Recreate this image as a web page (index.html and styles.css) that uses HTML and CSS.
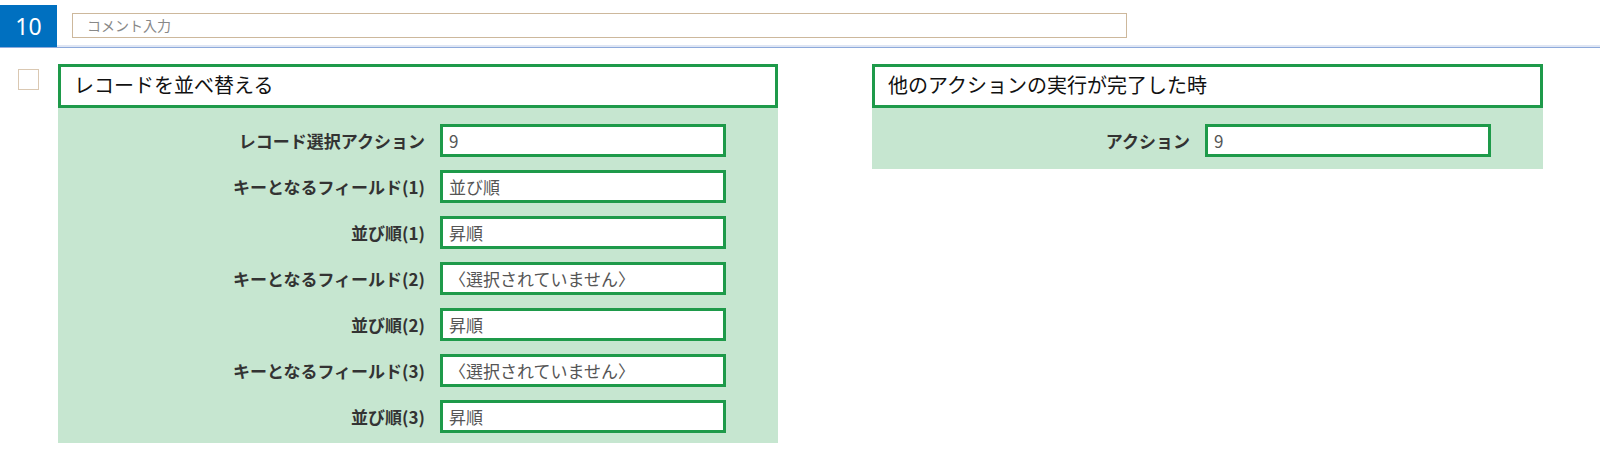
FILE: index.html
```html
<!DOCTYPE html>
<html lang="ja">
<head>
<meta charset="utf-8">
<title>Action 10</title>
<link rel="stylesheet" href="styles.css">
</head>
<body>
<div class="topbar">
  <div class="badge">10</div>
  <div class="comment">コメント入力</div>
</div>
<div class="content">
  <div class="check"></div>
  <div class="panel panel-left">
    <div class="panel-head">レコードを並べ替える</div>
    <div class="panel-body">
      <div class="row"><div class="label">レコード選択アクション</div><div class="field">9</div></div>
      <div class="row"><div class="label">キーとなるフィールド(1)</div><div class="field">並び順</div></div>
      <div class="row"><div class="label">並び順(1)</div><div class="field">昇順</div></div>
      <div class="row"><div class="label">キーとなるフィールド(2)</div><div class="field">〈選択されていません〉</div></div>
      <div class="row"><div class="label">並び順(2)</div><div class="field">昇順</div></div>
      <div class="row"><div class="label">キーとなるフィールド(3)</div><div class="field">〈選択されていません〉</div></div>
      <div class="row"><div class="label">並び順(3)</div><div class="field">昇順</div></div>
    </div>
  </div>
  <div class="panel panel-right">
    <div class="panel-head">他のアクションの実行が完了した時</div>
    <div class="panel-body panel-body-short">
      <div class="row"><div class="label">アクション</div><div class="field">9</div></div>
    </div>
  </div>
</div>
</body>
</html>
```

FILE: styles.css
```css
* { box-sizing: border-box; }
html, body { margin: 0; padding: 0; background: #fff; }
body {
  font-family: "Noto Sans CJK JP", "Noto Sans", sans-serif;
  color: #222;
  width: 1600px;
  height: 452px;
  overflow: hidden;
}
.topbar {
  display: flex;
  align-items: flex-start;
  height: 48px;
  border-bottom: 1px solid #8eaadb;
  box-shadow: inset 0 -2px 0 #dfe6f4;
}
.badge {
  margin-top: 5px;
  width: 57px;
  height: 42px;
  background: #0070c0;
  color: #fff;
  font-family: "Noto Sans", "Open Sans", sans-serif;
  font-size: 23px;
  line-height: 42px;
  text-align: center;
}
.comment {
  margin-top: 13px;
  margin-left: 15px;
  width: 1055px;
  height: 25px;
  border: 1px solid #cdb89c;
  background: #fff;
  color: #888;
  font-size: 14px;
  line-height: 23px;
  padding-left: 14px;
}
.content {
  display: flex;
  align-items: flex-start;
  padding: 16px 0 0 18px;
}
.check {
  width: 21px;
  height: 21px;
  margin-top: 5px;
  border: 1px solid #dac8b2;
  background: #fff;
}
.panel { background: #c6e6d0; }
.panel-left { margin-left: 19px; width: 720px; }
.panel-right { margin-left: 94px; width: 671px; }
.panel-head {
  height: 44px;
  border: 3px solid #1e9a4a;
  background: #fff;
  font-size: 20px;
  line-height: 36px;
  padding-left: 13px;
  color: #111;
}
.panel-body {
  display: flex;
  flex-direction: column;
  gap: 13px;
  padding: 16px 52px 10px 0;
}
.panel-body-short { padding-bottom: 12px; }
.row {
  display: grid;
  grid-template-columns: 1fr 286px;
  column-gap: 15px;
  align-items: center;
}
.label {
  text-align: right;
  font-weight: bold;
  font-size: 17px;
  color: #333;
  white-space: nowrap;
}
.field {
  height: 33px;
  border: 3px solid #1e9a4a;
  background: #fff;
  color: #555;
  font-size: 17px;
  line-height: 27px;
  padding-left: 6px;
  white-space: nowrap;
}
```
